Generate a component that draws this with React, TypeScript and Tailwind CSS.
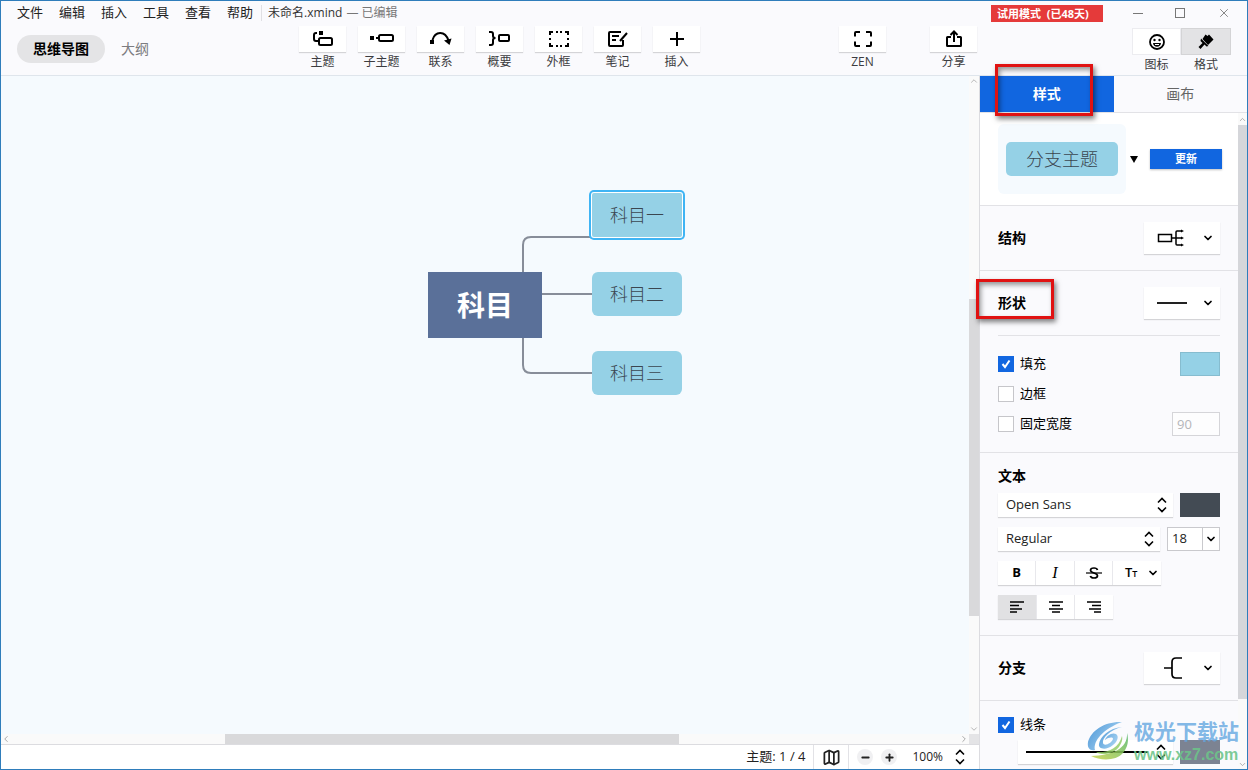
import { useState } from 'react';
import type { ReactNode } from 'react';
import { ChevronDown, ChevronLeft, ChevronRight, ChevronUp, Map as MapIcon, Minus, Plus, X } from 'lucide-react';

const menus = ['文件', '编辑', '插入', '工具', '查看', '帮助'];

const branches = [
  { id: 'b1', label: '科目一', pos: 'left-[591px] top-[117px]' },
  { id: 'b2', label: '科目二', pos: 'left-[591px] top-[196px]' },
  { id: 'b3', label: '科目三', pos: 'left-[591px] top-[275px]' },
];

function TopicIcon() {
  return (
    <svg width="20" height="16" viewBox="0 0 20 16" fill="none" stroke="black" strokeWidth="2">
      <rect x="6" y="0" width="4" height="4" fill="black" stroke="none" />
      <path d="M4 2H3Q1 2 1 4V8Q1 10 3 10H5" />
      <rect x="6" y="7" width="13" height="7" rx="1.5" />
    </svg>
  );
}

function SubtopicIcon() {
  return (
    <svg width="24" height="16" viewBox="0 0 24 16" fill="none" stroke="black" strokeWidth="2">
      <rect x="0" y="5" width="4" height="4" fill="black" stroke="none" />
      <path d="M6 7H9" />
      <rect x="9" y="4" width="14" height="6" rx="1.5" />
    </svg>
  );
}

function RelationIcon() {
  return (
    <svg width="22" height="16" viewBox="0 0 22 16" fill="none" stroke="black" strokeWidth="2">
      <rect x="0" y="9" width="4" height="4" fill="black" stroke="none" />
      <path d="M2.500 9C5 0 15 -1 18.500 9.500" />
      <path d="M14 9.500L21.500 7.500L19.500 14Z" fill="black" stroke="none" />
    </svg>
  );
}

function SummaryIcon() {
  return (
    <svg width="22" height="16" viewBox="0 0 22 16" fill="none" stroke="black" strokeWidth="2">
      <path d="M0 1H2Q4 1 4 3V5Q4 7 6.500 7Q4 7 4 9V12Q4 14 2 14H0" />
      <rect x="10" y="4" width="10" height="6" rx="1" />
    </svg>
  );
}

function BoundaryIcon() {
  return (
    <svg width="20" height="16" viewBox="0 0 20 16" fill="none" stroke="black" strokeWidth="2">
      <path d="M1 4V1H4M7 1H9M11 1H13M16 1H19V4M19 7V9M19 12V15H16M13 15H11M9 15H7M4 15H1V12M1 9V7" />
    </svg>
  );
}

function NoteIcon() {
  return (
    <svg width="20" height="16" viewBox="0 0 20 16" fill="none" stroke="black" strokeWidth="2">
      <path d="M13 1H2Q1 1 1 2V14Q1 15 2 15H14Q15 15 15 14V9" />
      <path d="M4 5H11M4 9H8" />
      <path d="M19 2L12 10" />
    </svg>
  );
}

function ZenIcon() {
  return (
    <svg width="18" height="16" viewBox="0 0 18 16" fill="none" stroke="black" strokeWidth="2">
      <path d="M1 5.500V2Q1 1 2 1H6M12 1H16Q17 1 17 2V5.500M17 10.500V14Q17 15 16 15H12M6 15H2Q1 15 1 14V10.500" />
    </svg>
  );
}

function ShareIcon() {
  return (
    <svg width="18" height="18" viewBox="0 0 18 18" fill="none" stroke="black" strokeWidth="2">
      <path d="M6 7H2.500Q2 7 2 7.500V15.500Q2 16 2.500 16H15.500Q16 16 16 15.500V7.500Q16 7 15.500 7H12" />
      <path d="M9 12V2M5.500 5L9 1.500L12.500 5" />
    </svg>
  );
}

function FaceIcon() {
  return (
    <svg width="16" height="16" viewBox="0 0 16 16" fill="none" stroke="black" strokeWidth="1.8">
      <circle cx="8" cy="8" r="7" />
      <circle cx="5.500" cy="6" r="1.200" fill="black" stroke="none" />
      <circle cx="10.500" cy="6" r="1.200" fill="black" stroke="none" />
      <path d="M4 9H12Q11.500 12.800 8 12.800Q4.500 12.800 4 9Z" fill="black" stroke="none" />
      <path d="M6 10.500H10" stroke="white" strokeWidth="1" />
    </svg>
  );
}

function BrushIcon() {
  return (
    <svg width="18" height="18" viewBox="0 0 18 18" fill="black">
      <path d="M8.500 1.500L10.500 3L12 1.500L16.500 6.500L11 12L5.500 6Z" />
      <path d="M4 5.500L11.500 13L9.500 13.500L7.500 11.500L3.500 16L1.500 14L5.500 10L3.500 8Z" />
    </svg>
  );
}

function ToolButton({ label, children }: { label: string; children: ReactNode }) {
  return (
    <button type="button" className="flex w-[47px] flex-col items-center whitespace-nowrap text-xs leading-5 text-[#3c3c40]">
      <span className="flex h-[26px] w-full items-center justify-center bg-white shadow-[0_1px_1px_rgba(0,0,0,0.15)]">
        {children}
      </span>
      {label}
    </button>
  );
}

function CheckBox({ label, defaultChecked }: { label: string; defaultChecked?: boolean }) {
  return (
    <label className="flex items-center gap-1.5 text-[13px] text-black">
      <span className="grid">
        <input
          type="checkbox"
          defaultChecked={defaultChecked}
          className="peer col-start-1 row-start-1 size-4 appearance-none border border-[#c6c6ca] bg-white checked:border-[#1166e0] checked:bg-[#1166e0]"
        />
        <svg viewBox="0 0 16 16" fill="none" stroke="white" strokeWidth="2" className="pointer-events-none invisible col-start-1 row-start-1 size-4 peer-checked:visible">
          <path d="M4.500 8L7 11L11.500 4.500" />
        </svg>
      </span>
      {label}
    </label>
  );
}

function UpDown() {
  return (
    <svg width="10" height="16" viewBox="0 0 10 16" fill="none" stroke="black" strokeWidth="1.6" className="pointer-events-none">
      <path d="M1 5.500L5 1.500L9 5.500M1 10.500L5 14.500L9 10.500" />
    </svg>
  );
}

function PickerButton({ label, children }: { label: string; children: ReactNode }) {
  return (
    <button type="button" aria-label={label} className="flex h-8 w-[76px] items-center justify-between bg-white pr-1.5 pl-3 shadow-[0_1px_1px_rgba(0,0,0,0.15)]">
      {children}
      <ChevronDown size={12} strokeWidth={3.5} />
    </button>
  );
}

function FontSelect({ label, options, className }: { label: string; options: string[]; className: string }) {
  return (
    <div className={`grid items-center bg-white shadow-[0_1px_1px_rgba(0,0,0,0.15)] ${className}`}>
      <select aria-label={label} className="col-start-1 row-start-1 h-6 w-full appearance-none bg-transparent pl-2 text-[13px] text-[#222]">
        {options.map((o) => (
          <option key={o}>{o}</option>
        ))}
      </select>
      <span className="pointer-events-none col-start-1 row-start-1 mr-1.5 justify-self-end">
        <UpDown />
      </span>
    </div>
  );
}

function AlignIcon({ d }: { d: string }) {
  return (
    <svg width="16" height="12" viewBox="0 0 16 12" stroke="black" strokeWidth="1.5">
      <path d={d} />
    </svg>
  );
}

function Header() {
  return (
    <header className="flex shrink-0 border-b border-[#dfe5ec] bg-[#fafafd]">
      <div className="flex min-w-0 flex-1 flex-col pb-0.5">
        <nav className="flex h-6 items-center whitespace-nowrap pl-4 text-[13px] text-[#222]">
          <div className="flex gap-4">
            {menus.map((m) => (
              <button key={m} type="button">{m}</button>
            ))}
          </div>
          <div className="ml-2 flex items-center border-l border-[#e0e0e4] pl-1.5 text-xs leading-4">
            <span className="text-[#333]">未命名.xmind</span>
            <span className="ml-1 text-[#777]">— 已编辑</span>
          </div>
        </nav>
        <div className="flex h-12 items-center pl-4">
          <button type="button" className="h-7 w-22 rounded-full bg-[#e4e4e6] text-sm font-bold text-black">思维导图</button>
          <button type="button" className="ml-4 text-sm text-[#7c7c80]">大纲</button>
          <div className="ml-[150px] flex gap-3">
            <ToolButton label="主题"><TopicIcon /></ToolButton>
            <ToolButton label="子主题"><SubtopicIcon /></ToolButton>
            <ToolButton label="联系"><RelationIcon /></ToolButton>
            <ToolButton label="概要"><SummaryIcon /></ToolButton>
            <ToolButton label="外框"><BoundaryIcon /></ToolButton>
            <ToolButton label="笔记"><NoteIcon /></ToolButton>
            <ToolButton label="插入">
              <svg width="14" height="14" viewBox="0 0 14 14" stroke="black" strokeWidth="2"><path d="M7 0V14M0 7H14" /></svg>
            </ToolButton>
          </div>
          <div className="ml-auto flex gap-11 pr-0.5">
            <ToolButton label="ZEN"><ZenIcon /></ToolButton>
            <ToolButton label="分享"><ShareIcon /></ToolButton>
          </div>
        </div>
      </div>
      <div className="flex w-[268px] shrink-0 flex-col">
        <div className="flex h-6 items-center justify-between pr-4 pl-3">
          <span className="h-[17px] w-[112px] bg-[#e53a3a] pl-1.5 text-[11px] leading-[18px] font-bold whitespace-nowrap text-white">试用模式&nbsp; (已48天)</span>
          <div className="flex items-center gap-8 text-[#777]">
            <button type="button" aria-label="最小化" className="h-px w-2.5 bg-[#777]" />
            <button type="button" aria-label="最大化" className="size-2.5 border border-[#777]" />
            <button type="button" aria-label="关闭"><X size={14} strokeWidth={1.5} /></button>
          </div>
        </div>
        <div className="flex justify-end pt-[3px] pr-4 text-xs leading-5 text-[#3c3c40]">
          <button type="button" className="flex w-[49px] flex-col items-center">
            <span className="flex h-[27px] w-full items-center justify-center border border-[#ececf0] bg-white"><FaceIcon /></span>
            图标
          </button>
          <button type="button" className="flex w-[50px] flex-col items-center">
            <span className="flex h-[27px] w-full items-center justify-center border border-[#d4d4d6] bg-[#e3e3e5]"><BrushIcon /></span>
            格式
          </button>
        </div>
      </div>
    </header>
  );
}

function Canvas() {
  const [selected, setSelected] = useState('b1');

  return (
    <div className="relative min-w-0 flex-1 overflow-hidden bg-[#f5fafe]">
      <svg width="700" height="400" className="absolute top-0 left-0" fill="none" stroke="#878d99" strokeWidth="2">
        <path d="M522 200V169Q522 161 530 161H592M540 218H592M522 260V289Q522 297 530 297H592" />
      </svg>
      <button type="button" className="absolute top-[196px] left-[427px] h-[66px] w-[114px] bg-[#5a7099] text-[28px] font-bold text-white">
        科目
      </button>
      {branches.map((b) => (
        <button
          key={b.id}
          type="button"
          onClick={() => setSelected(b.id)}
          className={`absolute h-11 w-[90px] bg-[#95d1e6] text-lg font-light text-[#3b4650] ${b.pos} ${
            selected === b.id ? 'rounded-xs shadow-[0_0_0_1px_#fff,0_0_0_3px_#3fb4f4]' : 'rounded-md'
          }`}
        >
          {b.label}
        </button>
      ))}
    </div>
  );
}

function Workspace() {
  return (
    <main className="flex min-w-0 flex-1 flex-col">
      <div className="flex min-h-0 flex-1">
        <Canvas />
        <div className="flex w-2.5 flex-col items-center justify-between bg-[#fafafa] text-[#aaa]">
          <ChevronUp size={10} />
          <div className="mt-[213px] mb-27 w-full flex-1 bg-[#d9d9db]" />
          <ChevronDown size={10} />
        </div>
      </div>
      <div className="flex h-2.5 items-center bg-[#fafafa] text-[#999]">
        <ChevronLeft size={10} />
        <div className="mr-[280px] ml-[214px] h-full flex-1 bg-[#d9d9db]" />
        <ChevronRight size={10} />
        <div className="size-2.5 bg-[#e4e4e6]" />
      </div>
      <footer className="flex h-[25px] items-stretch justify-end border-t border-[#dcdce0] bg-white text-xs text-[#222]">
        <span className="flex items-center pr-2 text-[13px]">主题: 1 / 4</span>
        <button type="button" aria-label="导航图" className="flex w-9 items-center justify-center border-x border-[#e2e2e6]">
          <MapIcon size={19} strokeWidth={2.2} />
        </button>
        <div className="flex items-center pr-3.5 pl-2">
          <button type="button" aria-label="缩小" className="grid size-4 place-items-center rounded-full bg-[#f0f0f2]"><Minus size={11} strokeWidth={4} /></button>
          <button type="button" aria-label="放大" className="ml-2 grid size-4 place-items-center rounded-full bg-[#f0f0f2]"><Plus size={11} strokeWidth={4} /></button>
          <span className="mr-3 ml-[15px]">100%</span>
          <button type="button" aria-label="缩放比例"><UpDown /></button>
        </div>
      </footer>
    </main>
  );
}

function StylePanel() {
  return (
    <div className="min-w-0 flex-1">
      <section className="flex h-[93px] items-center border-b border-[#e2e2e6] bg-white pl-[18px]">
        <div className="rounded-md bg-[#f5fafe] px-2 py-[18px]">
          <div className="h-[34px] w-28 rounded-[5px] bg-[#95d1e6] text-center text-lg leading-[34px] font-light text-[#3b4650]">分支主题</div>
        </div>
        <button type="button" aria-label="选择样式" className="ml-1">
          <svg width="8" height="7" viewBox="0 0 8 7"><path d="M0 0H8L4 7Z" /></svg>
        </button>
        <button type="button" className="ml-3 h-5 w-18 bg-[#1166e0] text-[11px] font-bold text-white shadow-[0_1px_2px_rgba(0,0,0,0.25)]">更新</button>
      </section>

      <section className="flex h-[65px] items-center justify-between border-b border-[#e2e2e6] px-[18px]">
        <h3 className="text-sm font-bold">结构</h3>
        <PickerButton label="结构">
          <svg width="30" height="18" viewBox="0 0 30 18" fill="none" stroke="black" strokeWidth="1.5">
            <rect x="2.500" y="5.500" width="13" height="7" />
            <path d="M15.500 9H26M26 2H21Q20 2 20 3V15Q20 16 21 16H26" />
            <path d="M25 .5V3.500L28 2ZM25 7.500V10.500L28 9ZM25 14.500V17.500L28 16Z" fill="black" stroke="none" />
          </svg>
        </PickerButton>
      </section>

      <section className="border-b border-[#e2e2e6] px-[18px]">
        <div className="flex h-[65px] items-center justify-between border-b border-[#e2e2e6]">
          <h3 className="text-sm font-bold">形状</h3>
          <PickerButton label="形状">
            <svg width="32" height="4" viewBox="0 0 32 4" stroke="#222" strokeWidth="2"><path d="M1 2H31" /></svg>
          </PickerButton>
        </div>
        <div className="py-[13px]">
          <div className="flex h-[30px] items-center justify-between">
            <CheckBox label="填充" defaultChecked />
            <button type="button" aria-label="填充颜色" className="h-6 w-10 border border-[#86bccf] bg-[#95d1e6]" />
          </div>
          <div className="flex h-[30px] items-center">
            <CheckBox label="边框" />
          </div>
          <div className="flex h-[30px] items-center justify-between">
            <CheckBox label="固定宽度" />
            <input aria-label="宽度" defaultValue="90" disabled className="h-6 w-12 border border-[#d5d5d9] bg-[#fdfdfe] pl-1 text-[13px] text-[#b5b5b9]" />
          </div>
        </div>
      </section>

      <section className="border-b border-[#e2e2e6] px-[18px] pt-[13px] pb-4">
        <h3 className="mb-[7px] text-sm leading-5 font-bold">文本</h3>
        <div className="flex flex-col gap-2.5">
          <div className="flex gap-[7px]">
            <FontSelect label="字体" options={['Open Sans', 'Roboto', 'Lato']} className="flex-1" />
            <button type="button" aria-label="文本颜色" className="h-6 w-10 bg-[#434b54]" />
          </div>
          <div className="flex gap-[7px]">
            <FontSelect label="字重" options={['Regular', 'Bold']} className="flex-1" />
            <div className="flex w-[53px] items-center border border-[#c9c9cd] bg-white">
              <input aria-label="字号" defaultValue="18" className="w-0 flex-1 pl-1 text-[13px] text-[#222]" />
              <button type="button" aria-label="选择字号" className="grid h-full w-[17px] place-items-center border-l border-[#c9c9cd]"><ChevronDown size={12} strokeWidth={3.5} /></button>
            </div>
          </div>
          <div className="flex h-6 w-[163px] divide-x divide-[#e8e8ec] bg-white text-[13px] text-black shadow-[0_1px_1px_rgba(0,0,0,0.15)]">
            <button type="button" aria-label="加粗" className="w-[38px] font-bold">B</button>
            <button type="button" aria-label="斜体" className="w-[39px] font-['Liberation_Serif',serif] text-base leading-6 italic">I</button>
            <button type="button" aria-label="删除线" className="grid w-[38px] place-items-center">
              <svg width="16" height="12" viewBox="0 0 16 12" fill="none" stroke="black" strokeWidth="1.700">
                <path d="M11.500 3Q11 1 8 1Q4.500 1 4.500 3.300Q4.500 5 8 6Q11.500 7 11.500 8.700Q11.500 11 8 11Q5 11 4.300 9" />
                <path d="M0 6H16" strokeWidth="1.200" />
              </svg>
            </button>
            <button type="button" aria-label="大小写" className="flex flex-1 items-center justify-between pr-0.5 pl-3">
              <span className="font-semibold">T<span className="text-[9px]">T</span></span>
              <ChevronDown size={12} strokeWidth={3.5} />
            </button>
          </div>
          <div className="flex h-6 w-[115px] divide-x divide-[#e8e8ec] bg-white shadow-[0_1px_1px_rgba(0,0,0,0.15)]">
            <button type="button" aria-label="左对齐" className="grid flex-1 place-items-center bg-[#e1e1e3]"><AlignIcon d="M1 1H15M1 4.500H10M1 8H13M1 11H8" /></button>
            <button type="button" aria-label="居中" className="grid flex-1 place-items-center"><AlignIcon d="M1 1H15M4 4.500H12M1 8H15M4 11H12" /></button>
            <button type="button" aria-label="右对齐" className="grid flex-1 place-items-center"><AlignIcon d="M1 1H15M6 4.500H15M3 8H15M8 11H15" /></button>
          </div>
        </div>
      </section>

      <section className="flex h-[65px] items-center justify-between border-b border-[#e2e2e6] px-[18px]">
        <h3 className="text-sm font-bold">分支</h3>
        <PickerButton label="分支">
          <svg width="32" height="24" viewBox="0 0 32 24" fill="none" stroke="black" strokeWidth="1.700">
            <path d="M8 12H16M26 2H20Q16 2 16 6V18Q16 22 20 22H26" />
          </svg>
        </PickerButton>
      </section>

      <section className="px-[18px] pt-[9px]">
        <div className="flex h-[30px] items-center">
          <CheckBox label="线条" defaultChecked />
        </div>
        <div className="flex gap-[7px] pl-5">
          <button type="button" aria-label="线条样式" className="flex h-6 flex-1 items-center gap-2 bg-white pr-[7px] pl-2 shadow-[0_1px_1px_rgba(0,0,0,0.15)]">
            <span className="h-0.5 flex-1 bg-black" />
            <UpDown />
          </button>
          <button type="button" aria-label="线条颜色" className="h-6 w-10 bg-[#7c8392]" />
        </div>
      </section>
    </div>
  );
}

function SidePanel() {
  return (
    <aside className="relative flex w-[268px] shrink-0 flex-col border-l border-[#dcdce0] bg-[#fafafd]">
      <div className="flex h-[37px] border-b border-[#e2e2e6] text-sm">
        <button type="button" className="h-9 flex-1 bg-[#1166e0] font-bold text-white">样式</button>
        <button type="button" className="h-9 flex-1 text-[#666]">画布</button>
      </div>
      <div className="flex min-h-0 flex-1 overflow-hidden">
        <StylePanel />
        <div className="flex w-[9px] flex-col items-center bg-[#fafafa] text-[#999]">
          <ChevronUp size={9} className="mt-0.5" />
          <div className="mt-px mb-[61px] w-full flex-1 bg-[#d5d6da]" />
          <ChevronDown size={9} />
        </div>
      </div>
      {/* tutorial highlight frames */}
      <div className="pointer-events-none absolute -top-3 left-[15px] h-[52px] w-[98px] border-3 border-[#e01212] shadow-[2px_3px_5px_rgba(0,0,0,0.5),inset_2px_3px_5px_rgba(0,0,0,0.4)]" />
      <div className="pointer-events-none absolute top-[203px] -left-1 h-10 w-[78px] border-3 border-[#e01212] shadow-[2px_3px_5px_rgba(0,0,0,0.5),inset_2px_3px_5px_rgba(0,0,0,0.4)]" />
      <Watermark />
    </aside>
  );
}

function Watermark() {
  return (
    <div className="pointer-events-none absolute right-2 bottom-1.5 flex items-center gap-1 whitespace-nowrap">
      <svg width="44" height="42" viewBox="0 0 44 42">
        <defs>
          <linearGradient id="swoosh" x1="0" y1="0" x2="1" y2="0.6">
            <stop offset="0" stopColor="#2b83cf" />
            <stop offset="1" stopColor="#9fd0f2" />
          </linearGradient>
          <linearGradient id="leaf" x1="0" y1="1" x2="1" y2="0">
            <stop offset="0" stopColor="#c9d44a" />
            <stop offset="1" stopColor="#4fb56a" />
          </linearGradient>
        </defs>
        <path d="M36 2C20 1 5 10 2 22C1 28 4 31 9 30C7 21 17 9 36 2Z" fill="url(#swoosh)" opacity="0.85" />
        <path d="M36 7C23 8 14 17 13 24C12 29 20 31 27 25C32 21 33 16 30 14C26 12 20 16 19 20C23 17 27 17 27 19C26 23 18 27 17 23C16 18 24 10 36 7Z" fill="url(#swoosh)" opacity="0.85" />
        <path d="M41 13C42 29 26 35 5 36C15 41 30 41 37 33C42 27 43 20 41 13Z" fill="url(#leaf)" opacity="0.85" />
        <path d="M36 16C33 28 22 33 10 32C16 36 28 34 33 27C35 24 37 20 36 16Z" fill="#8cc95c" opacity="0.8" />
      </svg>
      <div className="flex flex-col gap-1">
        <span className="text-[21px] leading-6 font-bold text-[#62a6e0]/80">极光下载站</span>
        <span className="font-['Liberation_Sans',sans-serif] text-base leading-4 font-bold text-[#6cc489]/90">www.xz7.com</span>
      </div>
    </div>
  );
}

export default function App() {
  return (
    <div className="flex h-screen flex-col overflow-hidden border border-[#2f7dbb] bg-white font-['Open_Sans','Noto_Sans_CJK_SC',sans-serif]">
      <Header />
      <div className="flex min-h-0 flex-1">
        <Workspace />
        <SidePanel />
      </div>
    </div>
  );
}
